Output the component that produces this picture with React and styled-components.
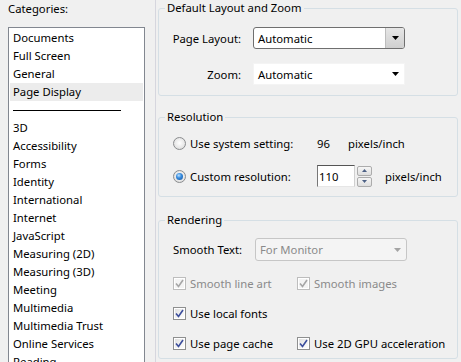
import React from 'react';
import styled, { createGlobalStyle, css } from 'styled-components';

const Global = createGlobalStyle`
  html, body { margin: 0; padding: 0; background: #f0f0f0; overflow: hidden; }
  body {
    font-family: "Noto Sans", "Liberation Sans", sans-serif;
    font-size: 11.3px;
    color: #000;
  }
`;

const Window = styled.div`
  display: flex;
  width: 461px;
  height: 362px;
  overflow: hidden;
  background: #f0f0f0;
`;

const Sidebar = styled.div`
  width: 155px;
  flex: none;
  padding: 2px 0 0 8px;
  box-sizing: border-box;
`;

const SideLabel = styled.div`
  line-height: 14px;
  margin-bottom: 11px;
`;

const ListBox = styled.ul`
  list-style: none;
  margin: 0;
  padding: 1px;
  width: 137px;
  height: 420px;
  box-sizing: border-box;
  background: #fff;
  border: 1px solid #828790;
`;

const Item = styled.li`
  height: 18px;
  line-height: 18px;
  padding-left: 3px;
  white-space: nowrap;
  background: ${p => (p.$selected ? '#ececec' : 'transparent')};
`;

const SepItem = styled.li`
  height: 18px;
  box-sizing: border-box;
  padding: 9px 0 0 3px;
`;

const Rule = styled.div`
  width: 108px;
  height: 1px;
  background: #000;
`;

const Panel = styled.div`
  flex: 1;
  border-left: 1px solid #d6d6de;
  padding: 1px 3px 0 2px;
  display: flex;
  flex-direction: column;
  min-width: 0;
`;

const Group = styled.fieldset`
  margin: ${p => p.$gap || 0}px 0 0 0;
  padding: ${p => p.$pt}px 0 ${p => p.$pb}px 0;
  border: 1px solid #d5dfe5;
  border-radius: 3px;
  min-width: 0;
`;

const Legend = styled.legend`
  padding: 0 2px;
  margin-left: 6px;
  line-height: 14px;
`;

const FormGrid = styled.div`
  display: grid;
  grid-template-columns: 82px 152px;
  column-gap: 12px;
  row-gap: 14px;
  align-items: center;
`;

const FieldLabel = styled.div`
  text-align: right;
`;

const SelectBox = styled.div`
  width: 152px;
  height: ${p => (p.$variant === 'disabled' ? 23 : 22)}px;
  box-sizing: border-box;
  display: flex;
  align-items: center;
  padding-left: 4px;
  background: #fff;
  ${p => p.$variant === 'focused' && css`
    border: 1px solid #6f6f6f;
    border-radius: 3px;
  `}
  ${p => p.$variant === 'plain' && css`
    border: 1px solid #f4f4f4;
  `}
  ${p => p.$variant === 'disabled' && css`
    border: 1px solid #c6c6c6;
    border-radius: 3px;
    background: #f4f4f4;
    color: #8a8a8a;
  `}
`;

const SelectText = styled.span`
  flex: 1;
  white-space: nowrap;
`;

const DropButton = styled.div`
  width: 18px;
  align-self: stretch;
  display: flex;
  align-items: center;
  justify-content: center;
  ${p => p.$shaded && css`
    background: linear-gradient(#e6e6e6, #cfcfcf);
    border-left: 1px solid #bdbdbd;
    border-radius: 0 2px 2px 0;
  `}
`;

const Arrow = ({ color = '#000' }) => (
  <svg width="7" height="4" viewBox="0 0 7 4">
    <polygon points="0,0 7,0 3.5,4" fill={color} />
  </svg>
);

const Select = ({ value, variant }) => (
  <SelectBox $variant={variant}>
    <SelectText>{value}</SelectText>
    <DropButton $shaded={variant === 'focused'}>
      <Arrow color={variant === 'disabled' ? '#a4a4a4' : '#000'} />
    </DropButton>
  </SelectBox>
);

const Rows = styled.div`
  display: flex;
  flex-direction: column;
  gap: ${p => p.$gap}px;
`;

const ResRow = styled.div`
  display: grid;
  grid-template-columns: 144px auto;
  align-items: center;
  height: 22px;
  padding-left: 14px;
`;

const Choice = styled.label`
  display: flex;
  align-items: center;
  gap: 4px;
  white-space: nowrap;
  color: ${p => (p.$disabled ? '#8a8a8a' : '#000')};
`;

const RadioCircle = styled.span`
  width: 13px;
  height: 13px;
  box-sizing: border-box;
  border-radius: 50%;
  border: 1px solid #8a8c8e;
  background: radial-gradient(circle at 50% 45%, #ffffff 0%, #e9e9e9 55%, #d2d2d2 100%);
  display: flex;
  align-items: center;
  justify-content: center;
  flex: none;
`;

const RadioDot = styled.span`
  width: 7px;
  height: 7px;
  border-radius: 50%;
  background: radial-gradient(circle at 40% 35%, #bfe3ff 0%, #3a8ee0 40%, #0f4f9a 100%);
`;

const Radio = ({ checked }) => (
  <RadioCircle>{checked && <RadioDot />}</RadioCircle>
);

const ValueCell = styled.div`
  display: flex;
  align-items: center;
`;

const Num = styled.span`
  width: 31px;
`;

const SpinInput = styled.div`
  width: 38px;
  height: 22px;
  box-sizing: border-box;
  background: #fff;
  border: 1px solid;
  border-color: #555 #d0d0d0 #e6e6e6 #777;
  padding-left: 1px;
  display: flex;
  align-items: center;
`;

const Spinner = styled.div`
  display: flex;
  flex-direction: column;
  gap: 1px;
  margin: 0 13px 0 2px;
`;

const SpinButton = styled.div`
  width: 15px;
  height: 10px;
  box-sizing: border-box;
  border: 1px solid #acacac;
  border-radius: 2px;
  background: linear-gradient(#f6f6f6, #dedede);
  display: flex;
  align-items: center;
  justify-content: center;
`;

const SmallArrow = ({ up }) => (
  <svg width="5" height="3" viewBox="0 0 5 3">
    <polygon points={up ? '0,3 5,3 2.5,0' : '0,0 5,0 2.5,3'} fill="#4d6185" />
  </svg>
);

const RenderSelectRow = styled.div`
  display: grid;
  grid-template-columns: 82px 152px;
  align-items: center;
  padding-left: 14px;
`;

const CheckRow = styled.div`
  display: grid;
  grid-template-columns: 124px auto;
  align-items: center;
  height: 16px;
  padding-left: 14px;
`;

const CheckBox = styled.span`
  width: 13px;
  height: 13px;
  box-sizing: border-box;
  border: 1px solid ${p => (p.$disabled ? '#bdbdbd' : '#8e8f8f')};
  background: ${p => (p.$disabled
    ? '#f4f4f4'
    : 'linear-gradient(135deg, #dcdcdc 0%, #f4f4f4 60%, #ffffff 100%)')};
  box-shadow: inset 0 0 0 1px #fff;
  display: flex;
  align-items: center;
  justify-content: center;
  flex: none;
`;

const Check = ({ disabled }) => (
  <CheckBox $disabled={disabled}>
    <svg width="11" height="11" viewBox="0 0 11 11">
      <path d="M2 5.5 L4.5 8.5 L9 2" fill="none"
        stroke={disabled ? '#a6a6a6' : '#3b4d9c'} strokeWidth="1.6" />
    </svg>
  </CheckBox>
);

const CheckItem = ({ label, disabled }) => (
  <Choice $disabled={disabled}>
    <Check disabled={disabled} />
    <span>{label}</span>
  </Choice>
);

const categories = ['Documents', 'Full Screen', 'General', 'Page Display'];
const categories2 = [
  '3D', 'Accessibility', 'Forms', 'Identity', 'International', 'Internet',
  'JavaScript', 'Measuring (2D)', 'Measuring (3D)', 'Meeting', 'Multimedia',
  'Multimedia Trust', 'Online Services', 'Reading',
];

export default function App() {
  return (
    <>
      <Global />
      <Window>
        <Sidebar>
          <SideLabel>Categories:</SideLabel>
          <ListBox>
            {categories.map(c => (
              <Item key={c} $selected={c === 'Page Display'}>{c}</Item>
            ))}
            <SepItem><Rule /></SepItem>
            {categories2.map(c => (
              <Item key={c}>{c}</Item>
            ))}
          </ListBox>
        </Sidebar>
        <Panel>
          <Group $pt={12} $pb={10}>
            <Legend>Default Layout and Zoom</Legend>
            <FormGrid>
              <FieldLabel>Page Layout:</FieldLabel>
              <Select value="Automatic" variant="focused" />
              <FieldLabel>Zoom:</FieldLabel>
              <Select value="Automatic" variant="plain" />
            </FormGrid>
          </Group>
          <Group $gap={14} $pt={8} $pb={9}>
            <Legend>Resolution</Legend>
            <Rows $gap={11}>
              <ResRow>
                <Choice><Radio /><span>Use system setting:</span></Choice>
                <ValueCell><Num>96</Num><span>pixels/inch</span></ValueCell>
              </ResRow>
              <ResRow>
                <Choice><Radio checked /><span>Custom resolution:</span></Choice>
                <ValueCell>
                  <SpinInput>110</SpinInput>
                  <Spinner>
                    <SpinButton><SmallArrow up /></SpinButton>
                    <SpinButton><SmallArrow /></SpinButton>
                  </Spinner>
                  <span>pixels/inch</span>
                </ValueCell>
              </ResRow>
            </Rows>
          </Group>
          <Group $gap={16} $pt={11} $pb={7}>
            <Legend>Rendering</Legend>
            <Rows $gap={14}>
              <RenderSelectRow>
                <span>Smooth Text:</span>
                <Select value="For Monitor" variant="disabled" />
              </RenderSelectRow>
              <CheckRow>
                <CheckItem label="Smooth line art" disabled />
                <CheckItem label="Smooth images" disabled />
              </CheckRow>
              <CheckRow>
                <CheckItem label="Use local fonts" />
              </CheckRow>
              <CheckRow>
                <CheckItem label="Use page cache" />
                <CheckItem label="Use 2D GPU acceleration" />
              </CheckRow>
            </Rows>
          </Group>
        </Panel>
      </Window>
    </>
  );
}
